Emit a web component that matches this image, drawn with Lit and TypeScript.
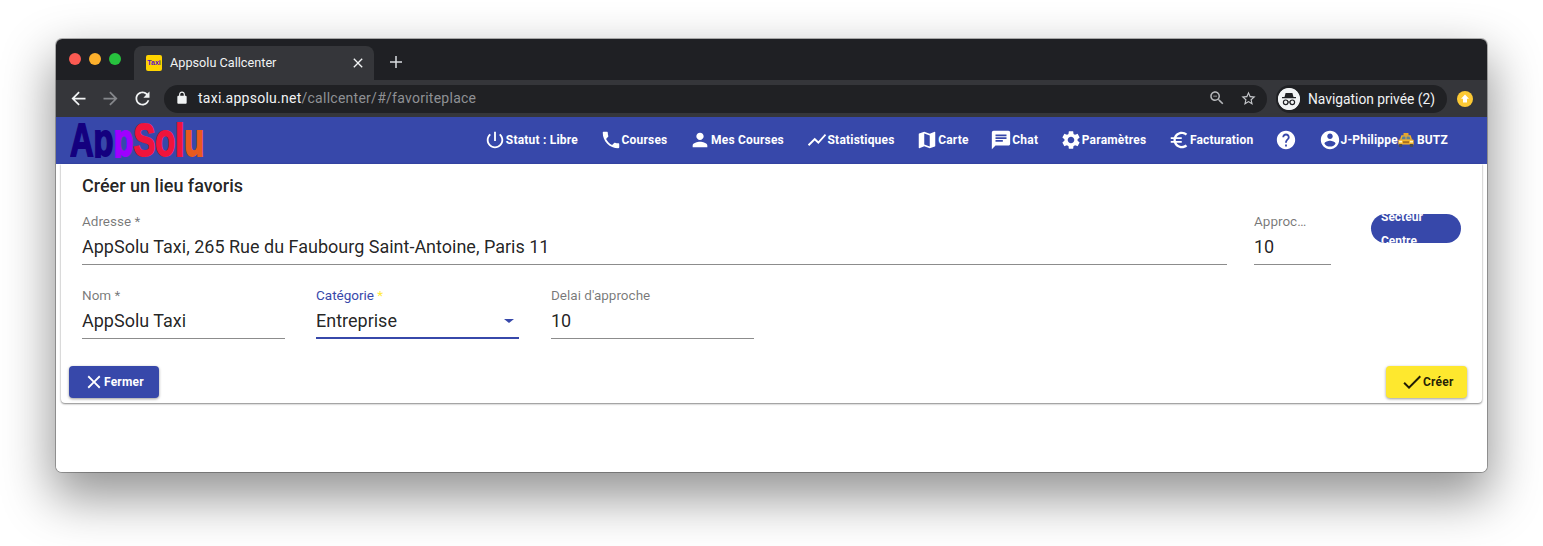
import { LitElement, html, css, svg } from "lit";
import { customElement } from "lit/decorators.js";

const P: Record<string, string> = {
  power: "M13 3h-2v10h2V3zm4.83 2.17l-1.42 1.42C17.99 7.86 19 9.81 19 12c0 3.87-3.13 7-7 7s-7-3.13-7-7c0-2.19 1.01-4.14 2.58-5.42L6.17 5.17C4.23 6.82 3 9.26 3 12c0 4.97 4.03 9 9 9s9-4.03 9-9c0-2.74-1.23-5.18-3.17-6.83z",
  phone: "M6.62 10.79c1.44 2.83 3.76 5.14 6.59 6.59l2.2-2.2c.27-.27.67-.36 1.02-.24 1.12.37 2.33.57 3.57.57.55 0 1 .45 1 1V20c0 .55-.45 1-1 1-9.39 0-17-7.61-17-17 0-.55.45-1 1-1h3.5c.55 0 1 .45 1 1 0 1.25.2 2.45.57 3.57.11.35.03.74-.25 1.02l-2.2 2.2z",
  person: "M12 12c2.21 0 4-1.79 4-4s-1.79-4-4-4-4 1.79-4 4 1.79 4 4 4zm0 2c-2.67 0-8 1.34-8 4v2h16v-2c0-2.66-5.33-4-8-4z",
  chart: "M3.5 18.49l6-6.01 4 4L22 6.92l-1.41-1.41-7.09 7.97-4-4L2 16.99z",
  map: "M20.5 3l-.16.03L15 5.1 9 3 3.36 4.9c-.21.07-.36.25-.36.48V20.5c0 .28.22.5.5.5l.16-.03L9 18.9l6 2.1 5.64-1.9c.21-.07.36-.25.36-.48V3.5c0-.28-.22-.5-.5-.5zM15 19l-6-2.11V5l6 2.11V19z",
  chat: "M20 2H4c-1.1 0-1.99.9-1.99 2L2 22l4-4h14c1.1 0 2-.9 2-2V4c0-1.1-.9-2-2-2zM6 9h12v2H6V9zm8 5H6v-2h8v2zm4-6H6V6h12v2z",
  settings: "M19.14,12.94c0.04-0.3,0.06-0.61,0.06-0.94c0-0.32-0.02-0.64-0.07-0.94l2.03-1.58c0.18-0.14,0.23-0.41,0.12-0.61 l-1.92-3.32c-0.12-0.22-0.37-0.29-0.59-0.22l-2.39,0.96c-0.5-0.38-1.03-0.7-1.62-0.94L14.4,2.81c-0.04-0.24-0.24-0.41-0.48-0.41 h-3.84c-0.24,0-0.43,0.17-0.47,0.41L9.25,5.35C8.66,5.59,8.12,5.92,7.63,6.29L5.24,5.33c-0.22-0.08-0.47,0-0.59,0.22L2.74,8.87 C2.62,9.08,2.66,9.34,2.86,9.48l2.03,1.58C4.84,11.36,4.8,11.69,4.8,12s0.02,0.64,0.07,0.94l-2.03,1.58 c-0.18,0.14-0.23,0.41-0.12,0.61l1.92,3.32c0.12,0.22,0.37,0.29,0.59,0.22l2.39-0.96c0.5,0.38,1.03,0.7,1.62,0.94l0.36,2.54 c0.05,0.24,0.24,0.41,0.48,0.41h3.84c0.24,0,0.44-0.17,0.47-0.41l0.36-2.54c0.59-0.24,1.13-0.56,1.62-0.94l2.39,0.96 c0.22,0.08,0.47,0,0.59-0.22l1.92-3.32c0.12-0.22,0.07-0.47-0.12-0.61L19.14,12.94z M12,15.6c-1.98,0-3.6-1.62-3.6-3.6 s1.62-3.6,3.6-3.6s3.6,1.62,3.6,3.6S13.98,15.6,12,15.6z",
  euro: "M15 18.5c-2.51 0-4.68-1.42-5.76-3.5H15v-2H8.58c-.05-.33-.08-.66-.08-1s.03-.67.08-1H15V9H9.24C10.32 6.92 12.5 5.5 15 5.5c1.61 0 3.09.59 4.23 1.57L21 5.3C19.41 3.87 17.3 3 15 3c-3.92 0-7.24 2.51-8.48 6H3v2h3.06c-.04.33-.06.66-.06 1 0 .34.02.67.06 1H3v2h3.52c1.24 3.49 4.56 6 8.48 6 2.31 0 4.41-.87 6-2.3l-1.78-1.77c-1.13.98-2.6 1.57-4.22 1.57z",
  help: "M12 2C6.48 2 2 6.48 2 12s4.48 10 10 10 10-4.48 10-10S17.52 2 12 2zm1 17h-2v-2h2v2zm2.07-7.75l-.9.92C13.45 12.9 13 13.5 13 15h-2v-.5c0-1.1.45-2.1 1.17-2.83l1.24-1.26c.37-.36.59-.86.59-1.41 0-1.1-.9-2-2-2s-2 .9-2 2H8c0-2.21 1.79-4 4-4s4 1.79 4 4c0 .88-.36 1.68-.93 2.25z",
  account: "M12 2C6.48 2 2 6.48 2 12s4.48 10 10 10 10-4.48 10-10S17.52 2 12 2zm0 3c1.66 0 3 1.34 3 3s-1.34 3-3 3-3-1.34-3-3 1.34-3 3-3zm0 14.2c-2.5 0-4.71-1.28-6-3.22.03-1.99 4-3.08 6-3.08 1.99 0 5.97 1.09 6 3.08-1.29 1.94-3.5 3.22-6 3.22z",
  close: "M19 6.41L17.59 5 12 10.59 6.41 5 5 6.41 10.59 12 5 17.59 6.41 19 12 13.41 17.59 19 19 17.59 13.41 12z",
  check: "M9 16.17L4.83 12l-1.42 1.41L9 19 21 7l-1.41-1.41z",
  back: "M20 11H7.83l5.59-5.59L12 4l-8 8 8 8 1.41-1.41L7.83 13H20v-2z",
  forward: "M12 4l-1.41 1.41L16.17 11H4v2h12.17l-5.58 5.59L12 20l8-8z",
  refresh: "M17.65 6.35C16.2 4.9 14.21 4 12 4c-4.42 0-7.99 3.58-7.99 8s3.57 8 7.99 8c3.73 0 6.84-2.55 7.73-6h-2.08c-.82 2.33-3.04 4-5.65 4-3.31 0-6-2.69-6-6s2.69-6 6-6c1.66 0 3.14.69 4.22 1.78L13 11h7V4l-2.35 2.35z",
  lock: "M18 8h-1V6c0-2.76-2.24-5-5-5S7 3.24 7 6v2H6c-1.1 0-2 .9-2 2v10c0 1.1.9 2 2 2h12c1.1 0 2-.9 2-2V10c0-1.1-.9-2-2-2zM12 3c1.66 0 3 1.34 3 3v2H9V6c0-1.66 1.34-3 3-3z",
  zoom: "M15.5 14h-.79l-.28-.27C15.41 12.59 16 11.11 16 9.5 16 5.91 13.09 3 9.5 3S3 5.91 3 9.5 5.91 16 9.5 16c1.61 0 3.09-.59 4.23-1.57l.27.28v.79l5 4.99L20.49 19l-4.99-5zm-6 0C7.01 14 5 11.99 5 9.5S7.01 5 9.5 5 14 7.01 14 9.5 11.99 14 9.5 14zM7 9h5v1H7z",
  star: "M22 9.24l-7.19-.62L12 2 9.19 8.63 2 9.24l5.46 4.73L5.82 21 12 17.27 18.18 21l-1.63-7.03L22 9.24zM12 15.4l-3.76 2.27 1-4.28-3.32-2.88 4.38-.38L12 6.1l1.71 4.04 4.38.38-3.32 2.88 1 4.28L12 15.4z",
};

const icon = (name: string, cls = "") =>
  html`<svg class="ic ${cls}" viewBox="0 0 24 24" fill="currentColor"><path d=${P[name]}></path></svg>`;

const taxi = html`<svg class="taxi" viewBox="0 0 16 14">
  <rect x="5.500" y="0" width="5" height="2.600" rx=".5" fill="#e9a62a"></rect>
  <path d="M3.400 2.200h9.200l1.500 4.600H1.900z" fill="#f3b32a"></path>
  <path d="M4.500 3.400h3v3.200H3.500zM8.500 3.400h3l1 3.200h-4z" fill="#5b7f99"></path>
  <path d="M1.500 6.400h13c.6 0 1.200.5 1.200 1.100V11.400H.3V7.500c0-.6.6-1.100 1.200-1.100z" fill="#f5b62c"></path>
  <rect x="1" y="7.800" width="3" height="1.700" fill="#fff3c4"></rect>
  <rect x="12" y="7.800" width="3" height="1.700" fill="#fff3c4"></rect>
  <rect x="5" y="8.200" width="6" height="2" fill="#a9701f"></rect>
  <rect x="1" y="11" width="3.200" height="3" rx=".6" fill="#4c4c4c"></rect>
  <rect x="11.800" y="11" width="3.200" height="3" rx=".6" fill="#4c4c4c"></rect>
</svg>`;

const NAV: [string, string][] = [
  ["power", "Statut : Libre"],
  ["phone", "Courses"],
  ["person", "Mes Courses"],
  ["chart", "Statistiques"],
  ["map", "Carte"],
  ["chat", "Chat"],
  ["settings", "Paramètres"],
  ["euro", "Facturation"],
];

@customElement("app-root")
export class AppRoot extends LitElement {
  static styles = css`
    :host {
      display: block;
      width: 1543px;
      height: 546px;
      padding: 39px 56px 0;
      box-sizing: border-box;
      background: #fff;
      font-family: Roboto, "Liberation Sans", sans-serif;
      overflow: hidden;
    }
    .window {
      height: 433px;
      border-radius: 6px;
      box-shadow: 0 0 0 1px rgba(0, 0, 0, 0.28), 0 22px 50px 4px rgba(0, 0, 0, 0.42);
      background: #fff;
      overflow: hidden;
      display: flex;
      flex-direction: column;
    }
    .ic { display: block; flex: none; width: 22px; height: 22px; }

    .tabs {
      height: 41px;
      background: #1f2024;
      display: flex;
      align-items: flex-end;
      box-sizing: border-box;
    }
    .lights { display: flex; gap: 8px; padding: 14px 0 0 13px; width: 78px; box-sizing: border-box; align-self: flex-start; }
    .light { width: 12px; height: 12px; border-radius: 50%; }
    .red { background: #fb5a52; }
    .amber { background: #fdb02c; }
    .green { background: #27c23e; }
    .tab {
      width: 240px;
      height: 34px;
      background: #35363a;
      border-radius: 8px 8px 0 0;
      display: flex;
      align-items: center;
      padding: 0 8px 1px 12px;
      box-sizing: border-box;
      color: #f1f3f4;
      font-size: 12.7px;
    }
    .fav {
      width: 16px;
      height: 16px;
      border-radius: 2px;
      background: #ffd400;
      font: bold 7px/16px "Liberation Sans", sans-serif;
      text-align: center;
      color: #5a10c0;
      margin-right: 8px;
      flex: none;
      overflow: hidden;
    }
    .tab-title { flex: 1; }
    .tab .ic { width: 16px; height: 16px; }
    .plus { color: #dadce0; margin: 0 0 8px 12px; width: 20px; height: 20px; }
    .plus .ic { width: 20px; height: 20px; }

    .toolbar {
      height: 37px;
      box-sizing: border-box;
      background: #35363a;
      display: flex;
      align-items: center;
      padding: 0 14px 0 12px;
      color: #f1f3f4;
    }
    .nav-btns { display: flex; gap: 11px; width: 96px; flex: none; margin-top: -1px; }
    .nav-btns .ic { width: 21px; height: 21px; }
    .dim { color: #85878b; }
    .omni {
      width: 1103px;
      height: 28px;
      border-radius: 14px;
      background: #202124;
      display: flex;
      align-items: center;
      padding: 0 10px 1px 11px;
      box-sizing: border-box;
      font-size: 14px;
      flex: none;
    }
    .omni .lock { width: 14px; height: 14px; margin-right: 9px; }
    .url { flex: 1; letter-spacing: 0.26px; }
    .url span { color: #8f9195; }
    .omni-ic { color: #b5b7ba; width: 18px; height: 18px; margin-left: 14px; }
    .omni-ic.st { color: #c4c6c9; width: 17px; height: 17px; }
    .incog {
      margin-left: 9px;
      width: 171px;
      height: 28px;
      border-radius: 14px;
      background: #202124;
      display: flex;
      align-items: center;
      box-sizing: border-box;
      padding-left: 2px;
      font-size: 13.8px;
      flex: none;
      white-space: nowrap;
    }
    .incog-ic {
      width: 22px;
      height: 22px;
      border-radius: 50%;
      background: #f1f3f4;
      margin-right: 8px;
      flex: none;
      display: block;
    }
    .update { width: 16px; height: 16px; margin-left: 10px; flex: none; display: block; }

    .bar {
      height: 47px;
      box-sizing: border-box;
      background: #3748aa;
      display: flex;
      align-items: flex-start;
      padding: 5px 39px 0 14px;
      color: #fff;
      flex: none;
    }
    .logo { width: 134px; height: 36px; overflow: hidden; flex: none; }
    .logo-text {
      display: inline-block;
      font: bold 46px/36px "Liberation Sans", sans-serif;
      transform: scaleX(0.71);
      transform-origin: left top;
      white-space: nowrap;
      -webkit-text-stroke: 1.8px currentColor;
    }
    .navy { color: #14007f; }
    .violet { color: #a000ff; }
    .crim { color: #f0143c; }
    .orange { color: #e85a1e; }
    .menu {
      margin-left: auto;
      height: 36px;
      display: flex;
      align-items: center;
      gap: 21.6px;
      font-size: 12px;
      font-weight: 700;
      letter-spacing: 0.2px;
      white-space: nowrap;
    }
    .item { display: flex; align-items: center; }
    .menu .help { width: 22px; height: 22px; }
    .taxi { width: 16px; height: 14px; flex: none; margin-right: 3px; display: block; }

    .content { flex: 1; padding: 0 5px; background: #fff; }
    .card {
      height: 239px;
      border-radius: 0 0 4px 4px;
      background: #fff;
      box-shadow: 0 1px 2px rgba(0, 0, 0, 0.45), 0 0 2px rgba(0, 0, 0, 0.12);
      padding: 0 8px;
      box-sizing: border-box;
      display: flex;
      flex-direction: column;
    }
    .title {
      font-size: 18px;
      font-weight: 500;
      line-height: 20px;
      color: rgba(0, 0, 0, 0.87);
      padding: 12px 0 0 13px;
    }
    .row1 { display: flex; align-items: flex-start; padding: 17px 13px 0 13px; }
    .row2 { display: flex; gap: 31px; padding: 22px 0 0 13px; }
    .field { display: flex; flex-direction: column; box-sizing: border-box; }
    .grow { flex: 1; }
    .w77 { width: 77px; margin-left: 27px; flex: none; }
    .w203 { width: 203px; flex: none; }
    .label { font-size: 13.5px; line-height: 16px; color: rgba(0, 0, 0, 0.54); white-space: nowrap; }
    .value {
      font-size: 18px;
      line-height: 24px;
      color: rgba(0, 0, 0, 0.87);
      padding: 6px 0 5px;
      border-bottom: 1px solid rgba(0, 0, 0, 0.45);
      display: flex;
      align-items: center;
      justify-content: space-between;
    }
    .focus { margin-right: 1px; }
    .focus .label { color: #3748aa; }
    .focus .req { color: #ffeb3b; }
    .focus .value { border-bottom: 2px solid #3748aa; padding-bottom: 4px; }
    .caret {
      width: 0;
      height: 0;
      border-left: 5px solid transparent;
      border-right: 5px solid transparent;
      border-top: 4px solid #3748aa;
      margin-right: 5px;
    }
    .pill {
      width: 90px;
      height: 29px;
      margin: 1px 0 0 40px;
      border-radius: 15px;
      background: #3748aa;
      color: #fff;
      font-size: 12px;
      font-weight: 700;
      line-height: 24px;
      overflow: hidden;
      padding: 0 10px;
      box-sizing: border-box;
      flex: none;
    }
    .pill-in { margin-top: -9px; }
    .actions { display: flex; justify-content: space-between; padding: 27px 7px 0 0; }
    .btn {
      height: 32px;
      border-radius: 4px;
      display: flex;
      align-items: center;
      box-sizing: border-box;
      font-size: 12px;
      font-weight: 700;
      letter-spacing: 0.2px;
      box-shadow: 0 1px 3px rgba(0, 0, 0, 0.4);
    }
    .fermer { width: 90px; background: #3748aa; color: #fff; padding-left: 14px; }
    .fermer .ic { width: 22px; height: 22px; margin-right: -1px; }
    .creer { width: 81px; background: #fee82e; color: rgba(0, 0, 0, 0.87); padding-left: 14px; }
    .creer .ic { width: 24px; height: 24px; margin-right: -1px; }
  `;

  render() {
    return html`
      <div class="window">
        <div class="tabs">
          <div class="lights">
            <div class="light red"></div>
            <div class="light amber"></div>
            <div class="light green"></div>
          </div>
          <div class="tab">
            <div class="fav">Taxi</div>
            <div class="tab-title">Appsolu Callcenter</div>
            ${icon("close")}
          </div>
          <div class="plus">
            <svg class="ic" viewBox="0 0 20 20" fill="currentColor"><path d="M9.250 4h1.500v5.250H16v1.500h-5.250V16h-1.500v-5.250H4v-1.500h5.250z"></path></svg>
          </div>
        </div>
        <div class="toolbar">
          <div class="nav-btns">
            ${icon("back")} ${icon("forward", "dim")} ${icon("refresh")}
          </div>
          <div class="omni">
            ${icon("lock", "lock")}
            <div class="url">taxi.appsolu.net<span>/callcenter/#/favoriteplace</span></div>
            ${icon("zoom", "omni-ic")} ${icon("star", "omni-ic st")}
          </div>
          <div class="incog">
            <svg class="incog-ic" viewBox="0 0 22 22">
              <circle cx="11" cy="11" r="11" fill="#f1f3f4"></circle>
              <path d="M7.600 5h6.800l1.100 4H18v1.300H4V9h2.500z" fill="#202124"></path>
              ${svg`<circle cx="7.700" cy="14.300" r="2.300" fill="none" stroke="#202124" stroke-width="1.200"></circle>
              <circle cx="14.300" cy="14.300" r="2.300" fill="none" stroke="#202124" stroke-width="1.200"></circle>
              <path d="M10 14h2" stroke="#202124" stroke-width="1.200"></path>`}
            </svg>
            Navigation privée (2)
          </div>
          <svg class="update" viewBox="0 0 16 16">
            <circle cx="8" cy="8" r="8" fill="#fcc934"></circle>
            <path d="M8 3.600l4 4.200H10v3.600H6V7.800H4z" fill="#fff"></path>
          </svg>
        </div>
        <div class="bar">
          <div class="logo">
            <span class="logo-text"><span class="navy">Ap</span><span class="violet">p</span><span class="crim">Sol</span><span class="orange">u</span></span>
          </div>
          <div class="menu">
            ${NAV.map(([i, t]) => html`<div class="item">${icon(i)}${t}</div>`)}
            <div class="item">${icon("help", "help")}</div>
            <div class="item">${icon("account")}J-Philippe${taxi} BUTZ</div>
          </div>
        </div>
        <div class="content">
          <div class="card">
            <div class="title">Créer un lieu favoris</div>
            <div class="row1">
              <div class="field grow">
                <div class="label">Adresse *</div>
                <div class="value">AppSolu Taxi, 265 Rue du Faubourg Saint-Antoine, Paris 11</div>
              </div>
              <div class="field w77">
                <div class="label">Approc…</div>
                <div class="value">10</div>
              </div>
              <div class="pill"><div class="pill-in">Secteur<br />Centre</div></div>
            </div>
            <div class="row2">
              <div class="field w203">
                <div class="label">Nom *</div>
                <div class="value">AppSolu Taxi</div>
              </div>
              <div class="field w203 focus">
                <div class="label">Catégorie <span class="req">*</span></div>
                <div class="value">Entreprise<span class="caret"></span></div>
              </div>
              <div class="field w203">
                <div class="label">Delai d'approche</div>
                <div class="value">10</div>
              </div>
            </div>
            <div class="actions">
              <div class="btn fermer">${icon("close")}Fermer</div>
              <div class="btn creer">${icon("check")}Créer</div>
            </div>
          </div>
        </div>
      </div>
    `;
  }
}
